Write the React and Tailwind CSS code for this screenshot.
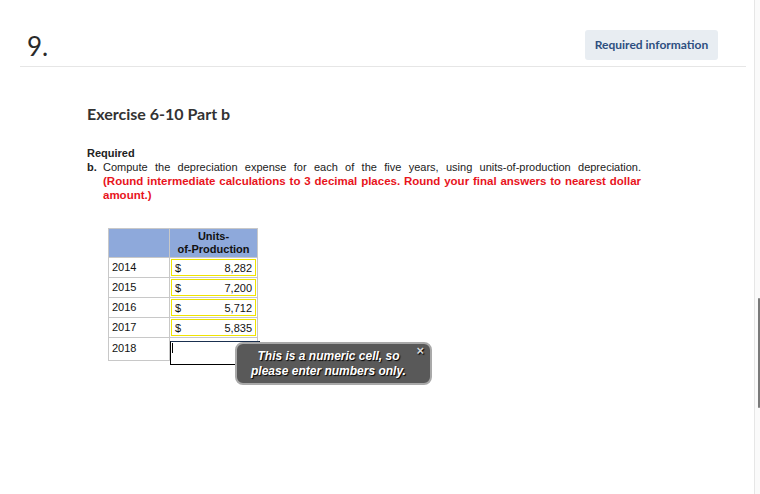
export default function App() {
  const rows = [
    ['2014', '8,282'],
    ['2015', '7,200'],
    ['2016', '5,712'],
    ['2017', '5,835'],
  ]

  return (
    <div className="flex h-[494px] w-[760px] overflow-hidden bg-white">
      <div className="w-[755px] border-r border-[#e6e6e6]">
        {/* question header */}
        <div className="ml-[20px] flex w-[726px] items-start justify-between border-b border-[#e6e6e6] pt-[30px] pb-[5px]">
          <p className="pl-[7px] pt-[1px] text-[26px] leading-[30px] text-[#2a2a2a]" style={{ fontFamily: 'Lato, sans-serif' }}>
            9.
          </p>
          <div
            className="mr-[28px] flex h-[30px] w-[133px] items-center justify-center rounded-[3px] bg-[#e8edf2] text-[12px] font-bold text-[#2d4f80]"
            style={{ fontFamily: 'Lato, sans-serif' }}
          >
            Required information
          </div>
        </div>

        <div className="pl-[87px] pt-[37px]">
          <h1 className="text-[16px] font-bold leading-[20px] text-[#333]" style={{ fontFamily: 'Lato, sans-serif' }}>
            Exercise 6-10 Part b
          </h1>

          <div className="mt-[22px] text-[11px] leading-[14px] text-[#222]" style={{ fontFamily: '"Liberation Sans", Arial, sans-serif' }}>
            <p className="font-bold">Required</p>
            <div className="flex">
              <span className="w-[16px] font-bold">b.</span>
              <div className="w-[538px]">
                <p className="text-justify [text-align-last:justify]">
                  Compute the depreciation expense for each of the five years, using units-of-production depreciation.
                </p>
                <p className="text-justify text-[11.5px] font-bold text-[#e8141c]">
                  (Round intermediate calculations to 3 decimal places. Round your final answers to nearest dollar amount.)
                </p>
              </div>
            </div>
          </div>

          {/* answer table */}
          <div className="relative ml-[21px] mt-[26px] w-[150px] text-[11px] text-[#111]" style={{ fontFamily: '"Liberation Sans", Arial, sans-serif' }}>
            <div className="flex h-[30px] border border-[#c8c8c8] bg-[#8ea9db]">
              <div className="w-[61px] border-r border-[#c8c8c8]" />
              <div className="flex-1 text-center font-bold leading-[13px] pt-[1px]">
                Units-
                <br />
                of-Production
              </div>
            </div>
            {rows.map(([year, value]) => (
              <div key={year} className="flex h-[20px] border-x border-b border-[#c8c8c8]">
                <div className="w-[61px] border-r border-[#c8c8c8] pl-[3px] leading-[19px]">{year}</div>
                <div className="m-[1px] flex flex-1 justify-between border border-[#f0e400] px-[3px] leading-[16px]">
                  <span>$</span>
                  <span>{value}</span>
                </div>
              </div>
            ))}
            <div className="flex h-[23px] border-x border-b border-[#c8c8c8]">
              <div className="w-[61px] border-r border-[#c8c8c8] pl-[3px] leading-[21px]">2018</div>
              <div className="relative flex-1">
                <div className="absolute left-[0px] top-[3px] h-[24px] w-[90px] border border-black border-t-[#1a3050] bg-white">
                  <div className="ml-[1px] mt-[1px] h-[10px] w-[1px] bg-black" />
                </div>
              </div>
            </div>

            {/* validation tooltip */}
            <div className="absolute left-[127px] top-[114px] flex h-[43px] w-[197px] flex-col items-center justify-center rounded-[8px] border-2 border-[#a9a9a9] bg-[#595959] pr-[10px] text-[12px] font-bold italic leading-[15px] text-white [text-shadow:1px_1px_1px_#000]">
              <span className="absolute right-[6px] top-[1px] text-[13px] not-italic leading-[12px] text-[#d8d8d8]">×</span>
              <span>This is a numeric cell, so</span>
              <span>please enter numbers only.</span>
            </div>
          </div>
        </div>
      </div>

      <div className="relative flex-1 bg-[#fafafa]">
        <div className="absolute left-[3px] top-[298px] h-[110px] w-[2px] rounded-full bg-[#7a7a7a]" />
      </div>
    </div>
  )
}
